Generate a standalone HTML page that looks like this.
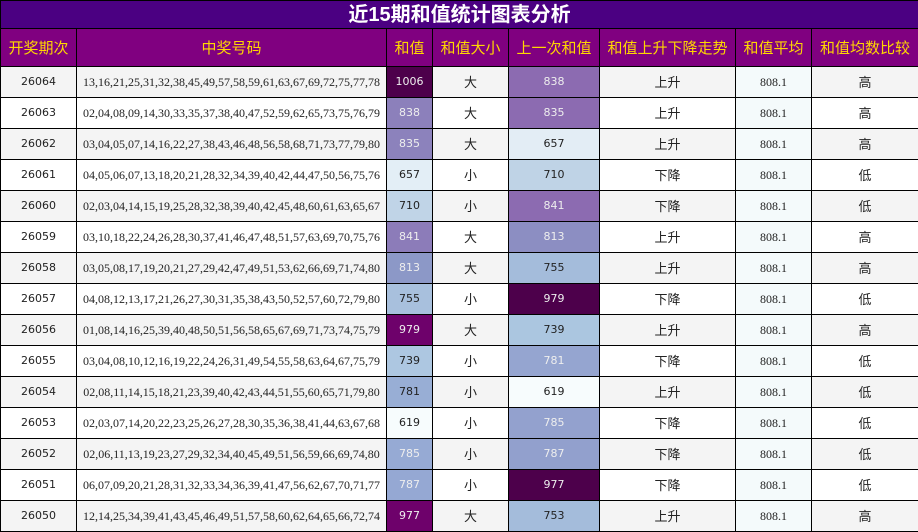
<!DOCTYPE html>
<html><head><meta charset="utf-8"><style>
body{margin:0;background:#fff;width:918px;height:532px;overflow:hidden}
table{border-collapse:collapse;table-layout:fixed;width:918px;position:absolute;left:0;top:0}
td,th{border:1px solid #000;padding:0;text-align:center;overflow:hidden;white-space:nowrap}
.t{height:27px;line-height:26px;background:#4b0082;color:#fff;font-weight:bold;font-size:20px;font-family:"Liberation Sans","Noto Sans CJK SC",sans-serif}
th{height:37px;line-height:20px;background:#800080;color:#ffd700;font:normal 15px "Liberation Sans","Noto Sans CJK SC",sans-serif}
td{height:30px;line-height:18px;font-size:12px;font-family:"Liberation Serif","Noto Sans CJK SC",serif;color:#222}
tr.a td{background:#f4f4f4}tr.b td{background:#fff}
td.c{font-family:"Noto Sans CJK SC",sans-serif;font-size:13px}
td.s{font-family:"DejaVu Sans",sans-serif;font-size:11px}
tr td.v{font-family:"DejaVu Sans",sans-serif;font-size:11px}
tr td.g{background:#f4fafb}
.w{color:#eee}
</style></head><body>
<table>
<colgroup><col style="width:76px"><col style="width:310px"><col style="width:46px"><col style="width:76px"><col style="width:91px"><col style="width:136px"><col style="width:76px"><col style="width:107px"></colgroup>
<tr><td colspan="8" class="t" style="background:#4b0082;color:#fff;font-size:20px;font-weight:bold">近15期和值统计图表分析</td></tr>
<tr><th>开奖期次</th><th>中奖号码</th><th>和值</th><th>和值大小</th><th>上一次和值</th><th>和值上升下降走势</th><th>和值平均</th><th>和值均数比较</th></tr>
<tr class="a"><td class="s">26064</td><td>13,16,21,25,31,32,38,45,49,57,58,59,61,63,67,69,72,75,77,78</td><td class="v w" style="background:#4d004b">1006</td><td class="c">大</td><td class="v w" style="background:#8c6bb1">838</td><td class="c">上升</td><td class="g">808.1</td><td class="c">高</td></tr>
<tr class="b"><td class="s">26063</td><td>02,04,08,09,14,30,33,35,37,38,40,47,52,59,62,65,73,75,76,79</td><td class="v w" style="background:#8c80bb">838</td><td class="c">大</td><td class="v w" style="background:#8c6bb1">835</td><td class="c">上升</td><td class="g">808.1</td><td class="c">高</td></tr>
<tr class="a"><td class="s">26062</td><td>03,04,05,07,14,16,22,27,38,43,46,48,56,58,68,71,73,77,79,80</td><td class="v w" style="background:#8c82bc">835</td><td class="c">大</td><td class="v" style="background:#e3edf5">657</td><td class="c">上升</td><td class="g">808.1</td><td class="c">高</td></tr>
<tr class="b"><td class="s">26061</td><td>04,05,06,07,13,18,20,21,28,32,34,39,40,42,44,47,50,56,75,76</td><td class="v" style="background:#e3eef6">657</td><td class="c">小</td><td class="v" style="background:#bfd3e6">710</td><td class="c">下降</td><td class="g">808.1</td><td class="c">低</td></tr>
<tr class="a"><td class="s">26060</td><td>02,03,04,14,15,19,25,28,32,38,39,40,42,45,48,60,61,63,65,67</td><td class="v" style="background:#c0d4e7">710</td><td class="c">小</td><td class="v w" style="background:#8c6bb1">841</td><td class="c">下降</td><td class="g">808.1</td><td class="c">低</td></tr>
<tr class="b"><td class="s">26059</td><td>03,10,18,22,24,26,28,30,37,41,46,47,48,51,57,63,69,70,75,76</td><td class="v w" style="background:#8c7cb9">841</td><td class="c">大</td><td class="v w" style="background:#8c8ec2">813</td><td class="c">上升</td><td class="g">808.1</td><td class="c">高</td></tr>
<tr class="a"><td class="s">26058</td><td>03,05,08,17,19,20,21,27,29,42,47,49,51,53,62,66,69,71,74,80</td><td class="v w" style="background:#8c98c7">813</td><td class="c">大</td><td class="v" style="background:#a4bcdb">755</td><td class="c">上升</td><td class="g">808.1</td><td class="c">高</td></tr>
<tr class="b"><td class="s">26057</td><td>04,08,12,13,17,21,26,27,30,31,35,38,43,50,52,57,60,72,79,80</td><td class="v" style="background:#a8c0dd">755</td><td class="c">小</td><td class="v w" style="background:#4d004b">979</td><td class="c">下降</td><td class="g">808.1</td><td class="c">低</td></tr>
<tr class="a"><td class="s">26056</td><td>01,08,14,16,25,39,40,48,50,51,56,58,65,67,69,71,73,74,75,79</td><td class="v w" style="background:#6e016b">979</td><td class="c">大</td><td class="v" style="background:#abc6e0">739</td><td class="c">上升</td><td class="g">808.1</td><td class="c">高</td></tr>
<tr class="b"><td class="s">26055</td><td>03,04,08,10,12,16,19,22,24,26,31,49,54,55,58,63,64,67,75,79</td><td class="v" style="background:#adc7e1">739</td><td class="c">小</td><td class="v w" style="background:#95a5d0">781</td><td class="c">下降</td><td class="g">808.1</td><td class="c">低</td></tr>
<tr class="a"><td class="s">26054</td><td>02,08,11,14,15,18,21,23,39,40,42,43,44,51,55,60,65,71,79,80</td><td class="v" style="background:#98aed5">781</td><td class="c">小</td><td class="v" style="background:#f7fcfd">619</td><td class="c">上升</td><td class="g">808.1</td><td class="c">低</td></tr>
<tr class="b"><td class="s">26053</td><td>02,03,07,14,20,22,23,25,26,27,28,30,35,36,38,41,44,63,67,68</td><td class="v" style="background:#f7fcfd">619</td><td class="c">小</td><td class="v w" style="background:#93a1ce">785</td><td class="c">下降</td><td class="g">808.1</td><td class="c">低</td></tr>
<tr class="a"><td class="s">26052</td><td>02,06,11,13,19,23,27,29,32,34,40,45,49,51,56,59,66,69,74,80</td><td class="v w" style="background:#96aad4">785</td><td class="c">小</td><td class="v w" style="background:#92a0cd">787</td><td class="c">下降</td><td class="g">808.1</td><td class="c">低</td></tr>
<tr class="b"><td class="s">26051</td><td>06,07,09,20,21,28,31,32,33,34,36,39,41,47,56,62,67,70,71,77</td><td class="v w" style="background:#95a8d3">787</td><td class="c">小</td><td class="v w" style="background:#4d004b">977</td><td class="c">下降</td><td class="g">808.1</td><td class="c">低</td></tr>
<tr class="a"><td class="s">26050</td><td>12,14,25,34,39,41,43,45,46,49,51,57,58,60,62,64,65,66,72,74</td><td class="v w" style="background:#6e016b">977</td><td class="c">大</td><td class="v" style="background:#a4bcdb">753</td><td class="c">上升</td><td class="g">808.1</td><td class="c">高</td></tr>
</table>
</body></html>
